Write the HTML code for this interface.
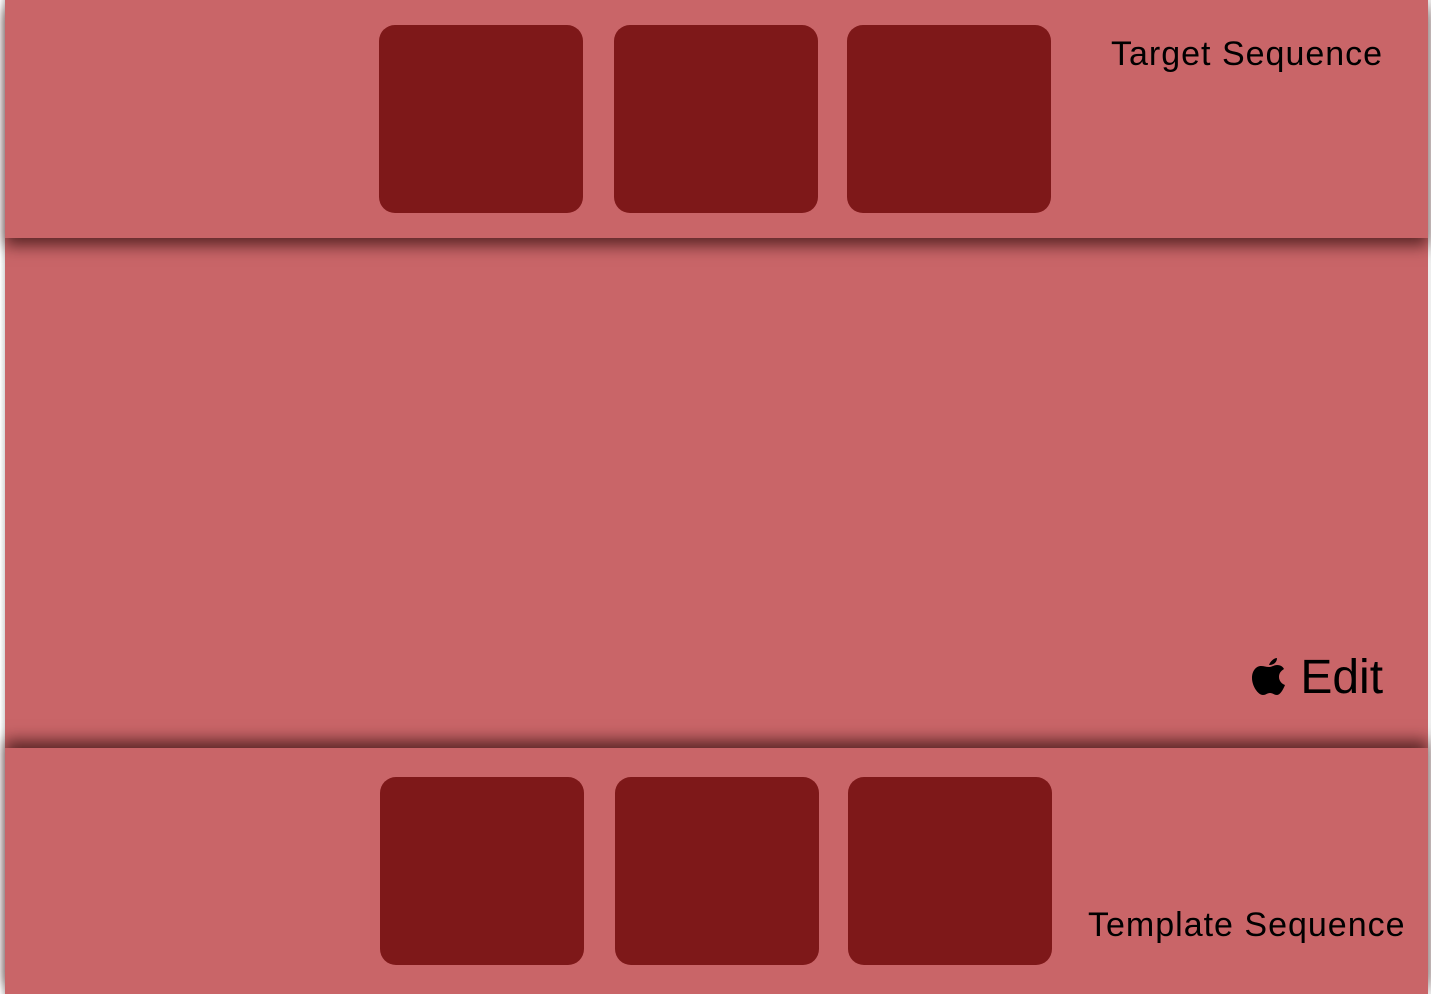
<!DOCTYPE html>
<html><head><style>
html,body{margin:0;padding:0;width:1431px;height:994px;overflow:hidden;background:#fff;font-family:"Liberation Sans",sans-serif;}
.wrap{position:absolute;left:5px;top:0;width:1423px;height:994px;background:#c96568;}
.edge{position:absolute;left:0;top:0;width:5px;height:994px;background:linear-gradient(to right,#fff,#d8d8d8);}
.redge{position:absolute;left:1428px;top:0;width:3px;height:994px;background:#eee;}
.top{position:absolute;left:0;top:0;width:1423px;height:238px;background:#c96568;box-shadow:0 8px 14px rgba(60,20,20,0.75);z-index:2;}
.bot{position:absolute;left:0;top:748px;width:1423px;height:246px;background:#c96568;box-shadow:0 -8px 14px rgba(60,20,20,0.75);z-index:2;}
.b{position:absolute;width:204px;height:188px;background:#7e1819;border-radius:16px;}
.t{position:absolute;color:#000;font-size:34px;letter-spacing:1px;}
</style></head><body>
<div class="edge"></div><div class="redge"></div>
<div class="wrap">
<div class="top">
<div class="b" style="left:374px;top:25px"></div>
<div class="b" style="left:609px;top:25px"></div>
<div class="b" style="left:842px;top:25px"></div>
<div class="t" style="left:1106px;top:35px;">Target Sequence</div>
</div>
<div class="t" style="left:1246px;top:650px;font-size:48px;letter-spacing:0">
<svg width="36" height="40" viewBox="0 0 36 40" style="vertical-align:-2px"><path d="M18 10c2-5 6-7 8-7 0 4-3 7-8 7zM18 12c3 0 5-2 8-2 4 0 6 2 7 4-3 2-5 4-5 8 0 4 3 7 6 8-2 5-5 10-8 10-3 0-4-2-7-2s-4 2-7 2C7 40 1 31 1 23c0-7 4-12 9-12 3 0 5 1 8 1z" fill="#000"/></svg> Edit</div>
<div class="bot">
<div class="b" style="left:375px;top:29px"></div>
<div class="b" style="left:610px;top:29px"></div>
<div class="b" style="left:843px;top:29px"></div>
<div class="t" style="left:1083px;top:158px;">Template Sequence</div>
</div>
</div>
</body></html>
